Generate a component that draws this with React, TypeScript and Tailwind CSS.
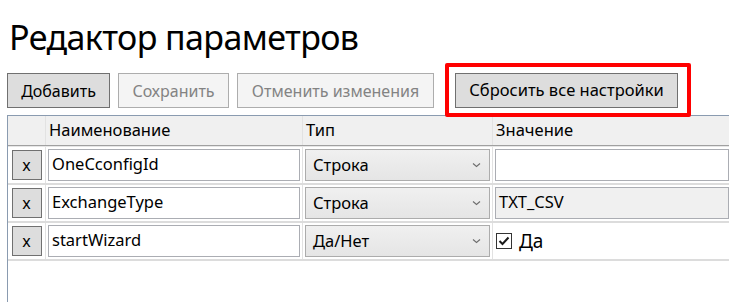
import { useState } from "react";

type Row = {
	name: string;
	type: string;
	value?: string;
	bool?: boolean;
	readOnly?: boolean;
};

function Chevron() {
	return (
		<svg width="9" height="6" viewBox="0 0 9 6" className="shrink-0">
			<path d="M1 1.5 L4.5 4.5 L8 1.5" fill="none" stroke="#6d6d6d" strokeWidth="1.1" />
		</svg>
	);
}

function App() {
	const [rows] = useState<Row[]>([
		{ name: "OneCconfigId", type: "Строка", value: "" },
		{ name: "ExchangeType", type: "Строка", value: "TXT_CSV", readOnly: true },
		{ name: "startWizard", type: "Да/Нет", bool: true },
	]);

	return (
		<div className="relative w-[729px] h-[302px] overflow-hidden bg-white text-black font-['Noto_Sans',sans-serif]">
			<h1 className="pl-[9px] pt-[15px] text-[34px] leading-[44px] tracking-[-0.6px]">
				Редактор параметров
			</h1>

			<div className="flex gap-2 pl-[7px] mt-[14px]">
				<button className="h-[35px] w-[103px] border border-[#707070] bg-[#dddddd] text-[16px]">
					Добавить
				</button>
				<button className="h-[35px] w-[111px] border border-[#adadad] bg-[#f4f4f4] text-[16px] text-[#838383]">
					Сохранить
				</button>
				<button className="h-[35px] w-[197px] border border-[#adadad] bg-[#f4f4f4] text-[16px] text-[#838383]">
					Отменить изменения
				</button>
				<button className="ml-[13px] h-[35px] w-[223px] border border-[#707070] bg-[#dddddd] text-[16.5px]">
					Сбросить все настройки
				</button>
			</div>

			<div className="ml-[7px] mt-[7px] h-[200px] border-l border-t border-[#8a9bb0]">
				<div className="grid grid-cols-[38px_257px_190px_1fr] h-[30px] bg-[#f0f0f0] border-b border-[#a0a0a0] text-[16.5px]">
					<div className="border-r border-[#e2e2e2]" />
					<div className="border-r border-[#e2e2e2] pl-[3px] leading-[28px]">Наименование</div>
					<div className="border-r border-[#e2e2e2] pl-[3px] leading-[28px]">Тип</div>
					<div className="pl-[3px] leading-[28px]">Значение</div>
				</div>
				<div className="h-px bg-[#e6e6e6]" />

				{rows.map((row) => (
					<div
						key={row.name}
						className="grid grid-cols-[38px_257px_190px_1fr] h-[38px] border-b-2 border-[#dcdcdc] text-[16.5px]"
					>
						<div className="flex items-center justify-center border-r border-[#e2e2e2]">
							<button className="h-[30px] w-[30px] border border-[#707070] bg-[#dddddd] text-[16px] leading-none">
								x
							</button>
						</div>
						<div className="flex items-center px-[2px] border-r border-[#e2e2e2]">
							<div className="h-[32px] w-full border border-[#abadb3] bg-white pl-[3px] leading-[28px]">
								{row.name}
							</div>
						</div>
						<div className="flex items-center px-[2px] border-r border-[#e2e2e2]">
							<div className="flex items-center justify-between h-[32px] w-full border border-[#acacac] bg-linear-to-b from-[#f0f0f0] to-[#e5e5e5] pl-[7px] pr-[8px]">
								<span className="leading-[28px]">{row.type}</span>
								<Chevron />
							</div>
						</div>
						<div className="flex items-center pl-[2px]">
							{row.bool ? (
								<div className="flex items-center gap-[7px] pl-[1px]">
									<div className="flex h-[16px] w-[16px] items-center justify-center border border-[#333333] bg-white">
										<svg width="12" height="10" viewBox="0 0 12 10">
											<path d="M1.5 5 L4.5 8 L10.5 1.5" fill="none" stroke="#1a1a1a" strokeWidth="2" />
										</svg>
									</div>
									<span className="text-[19px]">Да</span>
								</div>
							) : (
								<div
									className={
										row.readOnly
											? "h-[32px] w-full border border-[#abadb3] bg-[#f0f0f0] pl-[3px] leading-[28px]"
											: "h-[32px] w-full border border-[#abadb3] bg-white pl-[3px] leading-[28px]"
									}
								>
									{row.value}
								</div>
							)}
						</div>
					</div>
				))}
			</div>

			<div className="absolute left-[445px] top-[63px] h-[54px] w-[246px] rounded-[2px] border-[4px] border-[#ff0000]" />
		</div>
	);
}

export default App;
